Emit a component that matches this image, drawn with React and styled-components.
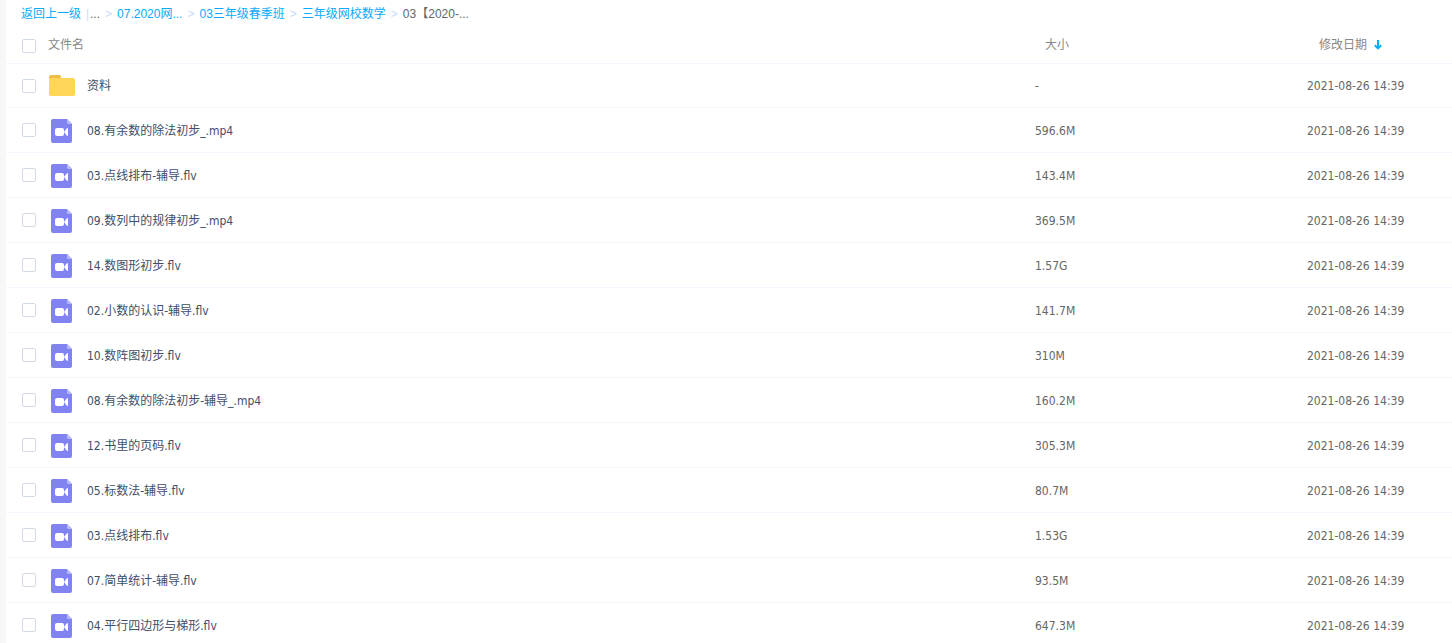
import React from "react";
import styled, { createGlobalStyle } from "styled-components";

const MODIFIED = "2021-08-26 14:39";

const files = [
    { name: "资料", size: "-", folder: true },
    { name: "08.有余数的除法初步_.mp4", size: "596.6M" },
    { name: "03.点线排布-辅导.flv", size: "143.4M" },
    { name: "09.数列中的规律初步_.mp4", size: "369.5M" },
    { name: "14.数图形初步.flv", size: "1.57G" },
    { name: "02.小数的认识-辅导.flv", size: "141.7M" },
    { name: "10.数阵图初步.flv", size: "310M" },
    { name: "08.有余数的除法初步-辅导_.mp4", size: "160.2M" },
    { name: "12.书里的页码.flv", size: "305.3M" },
    { name: "05.标数法-辅导.flv", size: "80.7M" },
    { name: "03.点线排布.flv", size: "1.53G" },
    { name: "07.简单统计-辅导.flv", size: "93.5M" },
    { name: "04.平行四边形与梯形.flv", size: "647.3M" },
];

const parents = ["07.2020网...", "03三年级春季班", "三年级网校数学"];

function FolderIcon() {
    return (
        <svg width="26" height="22" viewBox="0 0 26 22" aria-hidden="true">
            <path d="M0 8V2Q0 0 2 0H10.5Q12 0 12 1.5V8Z" fill="#eebd49" />
            <path
                d="M0 3H24Q26 3 26 5V19Q26 21 24 21H2Q0 21 0 19Z"
                fill="#ffd659"
            />
        </svg>
    );
}

function VideoIcon() {
    return (
        <svg width="22" height="26" viewBox="0 0 22 26" aria-hidden="true">
            <path
                d="M2 2H16L21 7V24Q21 26 19 26H2Q0 26 0 24V4Q0 2 2 2Z"
                fill="#8183f1"
            />
            <path d="M16 2L21 7H17.5Q16 7 16 5.5Z" fill="#b8b9f8" />
            <rect x="4" y="11" width="9" height="8" rx="2" fill="#fff" />
            <path
                d="M13 15L15.6 11.4Q17 10.4 17 12V18Q17 19.6 15.6 18.6Z"
                fill="#fff"
            />
        </svg>
    );
}

function SortIcon() {
    return (
        <svg width="8" height="10" viewBox="0 0 8 10" aria-hidden="true">
            <path
                d="M4 0V8M0.8 5.2L4 8.4L7.2 5.2"
                fill="none"
                stroke="#09aaff"
                strokeWidth="2"
            />
        </svg>
    );
}

function Breadcrumb() {
    return (
        <Crumbs aria-label="路径">
            <Crumb href="#up">返回上一级</Crumb>
            <Divider>|</Divider>
            <Ellipsis>...</Ellipsis>
            {parents.map((item) => (
                <React.Fragment key={item}>
                    <Arrow>&gt;</Arrow>
                    <Crumb href="#folder">{item}</Crumb>
                </React.Fragment>
            ))}
            <Arrow>&gt;</Arrow>
            <span>03【2020-...</span>
        </Crumbs>
    );
}

function FileRow({ file }) {
    return (
        <Row $folder={file.folder}>
            <Cell>
                <NameBox>
                    <Checkbox type="checkbox" aria-label={file.name} />
                    <IconBox>
                        {file.folder ? <FolderIcon /> : <VideoIcon />}
                    </IconBox>
                    <FileLink href="#file">{file.name}</FileLink>
                </NameBox>
            </Cell>
            <InfoCell>{file.size}</InfoCell>
            <InfoCell>{MODIFIED}</InfoCell>
        </Row>
    );
}

function App() {
    return (
        <>
            <GlobalStyle />
            <Panel>
                <Breadcrumb />
                <Table>
                    <thead>
                        <tr>
                            <HeadCell>
                                <NameBox>
                                    <Checkbox
                                        type="checkbox"
                                        aria-label="全选"
                                    />
                                    <HeadText>文件名</HeadText>
                                </NameBox>
                            </HeadCell>
                            <HeadCell $width="272px" $indent="10px">
                                <HeadText>大小</HeadText>
                            </HeadCell>
                            <HeadCell $width="145px" $indent="12px">
                                <SortButton type="button">
                                    修改日期
                                    <SortIcon />
                                </SortButton>
                            </HeadCell>
                        </tr>
                    </thead>
                    <tbody>
                        {files.map((file) => (
                            <FileRow key={file.name} file={file} />
                        ))}
                    </tbody>
                </Table>
            </Panel>
        </>
    );
}

export default App;

const GlobalStyle = createGlobalStyle`
    * {
        box-sizing: border-box;
    }
    body {
        margin: 0;
        background: #fff;
        color: #666;
        font-family: "DejaVu Sans Condensed", "Noto Sans", "Noto Sans CJK SC", sans-serif;
        font-size: 12px;
    }
`;
const Panel = styled.main`
    height: 100vh;
    overflow: hidden;
    border-left: 6px solid #f7f7f7;
`;
const Crumbs = styled.nav`
    display: flex;
    gap: 5px;
    padding-left: 15px;
    font-family: "Liberation Sans", "Noto Sans CJK SC", sans-serif;
    line-height: 28px;
    white-space: nowrap;
`;
const Crumb = styled.a`
    color: #09aaff;
    text-decoration: none;
`;
const Divider = styled.span`
    width: 3px;
    margin-right: -4px;
    color: #c4dbfe;
`;
const Ellipsis = styled.span`
    color: #666;
`;
const Arrow = styled.span`
    color: #c4dbfe;
`;
const Table = styled.table`
    width: 100%;
    table-layout: fixed;
    border-spacing: 0;
`;
const HeadCell = styled.th`
    width: ${({ $width }) => $width || "auto"};
    height: 36px;
    padding: 0 0 0 ${({ $indent }) => $indent || "0"};
    border-bottom: 1px solid #f2f6fd;
    color: #888;
    font-weight: normal;
    text-align: left;
`;
const HeadText = styled.span`
    display: block;
    padding-bottom: 1px;
    line-height: 18px;
`;
const Row = styled.tr`
    height: ${({ $folder }) => ($folder ? "44px" : "45px")};
`;
const Cell = styled.td`
    padding: 0;
    border-bottom: 1px solid #f2f6fd;
    white-space: nowrap;
`;
const InfoCell = styled(Cell)`
    padding-top: 1px;
    line-height: 14px;
`;
const NameBox = styled.div`
    display: flex;
    align-items: center;
    padding-left: 16px;
`;
const Checkbox = styled.input`
    appearance: none;
    width: 14px;
    height: 14px;
    margin: 0 12px 0 0;
    border: 1px solid #d3dae6;
    border-radius: 2px;
    background: #fff;
    &:checked {
        background: #09aaff;
    }
`;
const IconBox = styled.span`
    display: flex;
    justify-content: center;
    width: 28px;
    margin-right: 11px;
`;
const FileLink = styled.a`
    padding-top: 1px;
    color: #424e67;
    line-height: 18px;
    text-decoration: none;
`;
const SortButton = styled.button`
    display: flex;
    align-items: center;
    gap: 7px;
    padding: 0 0 1px;
    border: 0;
    background: none;
    color: inherit;
    font: inherit;
    line-height: 18px;
`;
